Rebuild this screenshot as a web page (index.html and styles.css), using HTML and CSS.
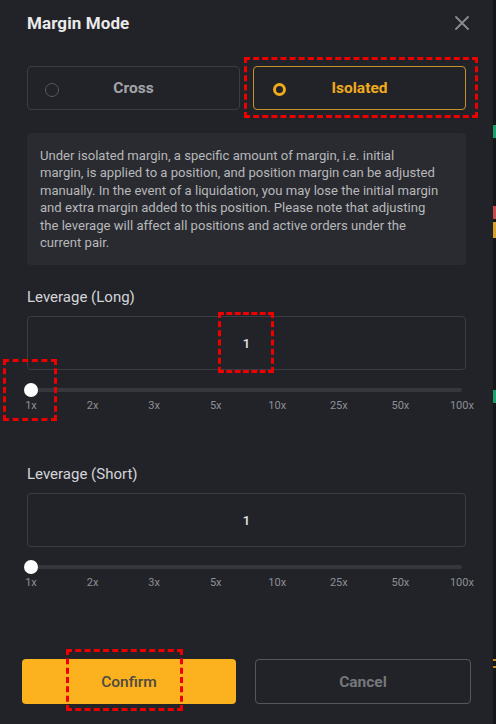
FILE: index.html
```html
<!DOCTYPE html>
<html>
<head>
<meta charset="utf-8">
<link rel="stylesheet" href="styles.css">
</head>
<body>
<div class="page">
  <div class="modal">
    <div class="header">
      <h1 class="title">Margin Mode</h1>
      <svg class="close" width="14" height="14" viewBox="0 0 14 14"><path d="M1 1L13 13M13 1L1 13" stroke="#8a8b90" stroke-width="1.8" stroke-linecap="round"/></svg>
    </div>
    <div class="modes">
      <div class="mode">
        <span class="radio"></span>
        <span class="mode-label">Cross</span>
      </div>
      <div class="mode active">
        <span class="radio on"></span>
        <span class="mode-label">Isolated</span>
      </div>
    </div>
    <div class="info">Under isolated margin, a specific amount of margin, i.e. initial<br>margin, is applied to a position, and position margin can be adjusted<br>manually. In the event of a liquidation, you may lose the initial margin<br>and extra margin added to this position. Please note that adjusting<br>the leverage will affect all positions and active orders under the<br>current pair.</div>

    <div class="lev">
      <div class="lev-label">Leverage (Long)</div>
      <div class="input"><span class="val">1</span></div>
      <div class="slider">
        <div class="track"><span class="thumb"></span></div>
        <div class="ticks"><span>1x</span><span>2x</span><span>3x</span><span>5x</span><span>10x</span><span>25x</span><span>50x</span><span>100x</span></div>
      </div>
    </div>

    <div class="lev short">
      <div class="lev-label">Leverage (Short)</div>
      <div class="input"><span class="val">1</span></div>
      <div class="slider">
        <div class="track"><span class="thumb"></span></div>
        <div class="ticks"><span>1x</span><span>2x</span><span>3x</span><span>5x</span><span>10x</span><span>25x</span><span>50x</span><span>100x</span></div>
      </div>
    </div>

    <div class="actions">
      <button class="btn confirm">Confirm</button>
      <button class="btn cancel">Cancel</button>
    </div>

    <span class="mark mark-iso"></span>
    <span class="mark mark-val"></span>
    <span class="mark mark-1x"></span>
    <span class="mark mark-confirm"></span>
  </div>
  <div class="edge">
    <span class="tick-g" style="top:125px"></span>
    <span class="tick-r" style="top:206px"></span>
    <span class="tick-y" style="top:222px"></span>
    <span class="tick-g" style="top:390px"></span>
    <span class="tick-y2" style="top:659px"></span>
    <span class="tick-y2" style="top:666px"></span>
  </div>
</div>
</body>
</html>
```
FILE: styles.css
```css
* { box-sizing: border-box; }
html, body { margin: 0; padding: 0; }
body {
  width: 496px;
  height: 724px;
  background: #222329;
  font-family: Roboto, "Noto Sans", sans-serif;
  overflow: hidden;
}
.page { display: flex; height: 724px; }
.modal {
  width: 493px;
  background: #222329;
  padding: 0 27px 0 27px;
  display: flex;
  flex-direction: column;
  position: relative;
}
.edge {
  width: 3px;
  background: #15161a;
  position: relative;
}
.edge span { position: absolute; left: 0; width: 3px; }
.tick-g { height: 13px; background: #1e9e6a; }
.tick-r { height: 13px; background: #c84a4a; }
.tick-y { height: 16px; background: #d6a02a; }
.tick-y2 { height: 2px; background: #c98d2a; }

.header {
  height: 44px;
  display: flex;
  align-items: center;
  justify-content: space-between;
  padding-top: 1px;
}
.title {
  margin: 0;
  font-size: 17px;
  font-weight: 700;
  color: #eaeaea;
  letter-spacing: 0.1px;
}
.close { margin-right: -3px; }

.modes {
  margin-top: 22px;
  display: flex;
  gap: 13px;
}
.mode {
  flex: 1;
  height: 44px;
  border: 1px solid #3b3d43;
  border-radius: 4px;
  display: flex;
  align-items: center;
  position: relative;
}
.mode .radio {
  position: absolute;
  left: 17px;
  top: 16px;
  width: 14px;
  height: 14px;
  border: 1.5px solid #56585e;
  border-radius: 50%;
}
.mode .radio.on {
  left: 19px;
  top: 16px;
  border: 3.5px solid #f0ab1d;
  width: 13px;
  height: 13px;
}
.mode-label {
  flex: 1;
  text-align: center;
  font-size: 15.5px;
  font-weight: 700;
  color: #a4a5a9;
}
.mode.active { border-color: #c4922c; }
.mode.active .mode-label { color: #f0ab1d; }

.info {
  margin-top: 23px;
  background: #2a2b30;
  border-radius: 4px;
  padding: 14px 6px 14px 13px;
  font-size: 13.1px;
  line-height: 17.4px;
  color: #b7b8bb;
  white-space: nowrap;
  overflow: hidden;
}

.lev { margin-top: 23px; }
.lev.short { margin-top: 53px; }
.lev-label {
  font-size: 15px;
  color: #d4d5d8;
  line-height: 18px;
}
.input {
  margin-top: 10px;
  height: 54px;
  border: 1px solid #3b3d43;
  border-radius: 4px;
  display: flex;
  align-items: center;
  justify-content: center;
}
.val { font-size: 13px; color: #e6e6e6; font-weight: 500; }
.slider { margin-top: 18px; }
.track {
  margin: 0 4px 0 3px;
  height: 4px;
  border-radius: 2px;
  background: #35373d;
  position: relative;
}
.thumb {
  position: absolute;
  left: -6px;
  top: -5px;
  width: 14px;
  height: 14px;
  border-radius: 50%;
  background: #ffffff;
}
.ticks {
  margin: 8px 4px 0 4px;
  display: flex;
  justify-content: space-between;
  font-size: 11px;
  line-height: 12px;
  color: #8e8f93;
}
.ticks span {
  width: 0;
  display: flex;
  justify-content: center;
  white-space: nowrap;
}

.actions {
  margin-top: auto;
  margin-bottom: 20px;
  margin-left: -5px;
  margin-right: -5px;
  display: flex;
  gap: 19px;
}
.btn {
  flex: 1;
  height: 45px;
  border-radius: 4px;
  font-family: Roboto, "Noto Sans", sans-serif;
  font-size: 15.5px;
  font-weight: 500;
}
.confirm { background: #fcb21e; border: none; color: #4d4a42; }
.cancel { background: transparent; border: 1.5px solid #55575d; color: #76777b; font-weight: 700; }

.mark {
  position: absolute;
  border: 3px dashed #ee0000;
  pointer-events: none;
}
.mark-iso { left: 244px; top: 57px; width: 234px; height: 61px; }
.mark-val { left: 218px; top: 312px; width: 56px; height: 61px; }
.mark-1x { left: 3px; top: 359px; width: 54px; height: 62px; }
.mark-confirm { left: 66px; top: 649px; width: 117px; height: 62px; }
```
